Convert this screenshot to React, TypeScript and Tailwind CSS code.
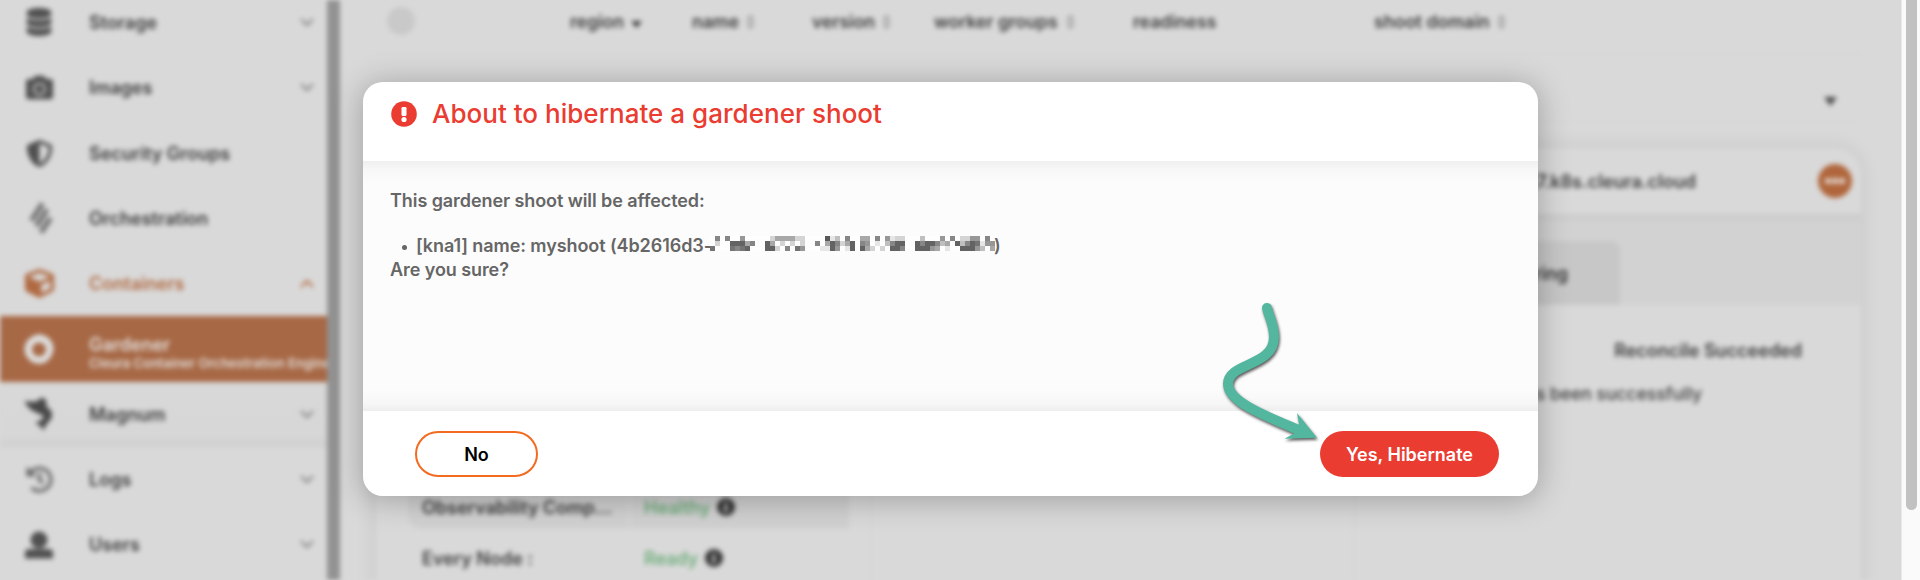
import React from "react";
import { FaDatabase, FaCamera, FaShieldAlt, FaHistory, FaCube } from "react-icons/fa";

const OrchestrationIcon = () => (
  <svg width="24" height="34" viewBox="0 0 24 34" className="ml-1" fill="none" stroke="#6e6e6e" strokeWidth="5">
    <path d="M2.500 19.500L13.500 2.500" />
    <path d="M7.500 25L18 8.500" />
    <path d="M12 31.500L21.500 17" />
  </svg>
);

const GardenerIcon = () => (
  <svg width="30" height="30" viewBox="0 0 30 30">
    <path d="M15 0l8 2.500 5 5.500 1.800 7-2.800 8-5.500 5.500L15 30l-7.500-2L2 22 .2 15 2.500 7.500 8 2.500z" fill="#dedede" />
    <circle cx="15" cy="15.500" r="7" fill="#a76845" />
  </svg>
);

const MagnumIcon = () => (
  <svg width="32" height="36" viewBox="0 0 32 36" fill="#484848">
    <path d="M.5 4.500L12 5l8-5 4 4.500V10l5.500 5v7.500L24 29l-3.500 6.500L17.500 31 12 27l6-2 3.500-4.500L14 17l-6-3-5-5z" />
  </svg>
);

const UserIcon = () => (
  <svg width="28" height="28" viewBox="0 0 28 28" fill="#505050">
    <circle cx="14" cy="9" r="8.500" />
    <path d="M4 18h20a4 4 0 0 1 4 4v5.500H0V22a4 4 0 0 1 4-4z" />
  </svg>
);

const Chevron = ({ up = false, color = "#8a8a8a" }: { up?: boolean; color?: string }) => (
  <svg width="14" height="9" viewBox="0 0 14 9" fill="none" stroke={color} strokeWidth="2.400">
    <path d={up ? "M1 8l6-6 6 6" : "M1 1l6 6 6-6"} />
  </svg>
);

const Sorter = () => (
  <svg width="9" height="16" viewBox="0 0 9 16" fill="#a8a8a8">
    <path d="M4.500 0L9 7H0zM4.500 16L9 9H0z" />
  </svg>
);

type NavRow = { label: string; icon: React.ReactNode; arrow?: boolean };

const topRows: NavRow[] = [
  { label: "Storage", icon: <FaDatabase size={28} />, arrow: true },
  { label: "Images", icon: <FaCamera size={27} />, arrow: true },
  { label: "Security Groups", icon: <FaShieldAlt size={27} /> },
  { label: "Orchestration", icon: <OrchestrationIcon /> },
];

const bottomRows: NavRow[] = [
  { label: "Logs", icon: <FaHistory size={27} color="#6a6a6a" />, arrow: true },
  { label: "Users", icon: <UserIcon />, arrow: true },
];

const Row = ({ label, icon, arrow }: NavRow) => (
  <div className="flex h-[65.300px] shrink-0 items-center text-[#505050]">
    <div className="ml-[24px] flex w-[30px] justify-center">{icon}</div>
    <div className="ml-[35px] flex-1 text-[18px] font-semibold text-[#3c3c3c]">{label}</div>
    {arrow && (
      <div className="mr-[13px]">
        <Chevron />
      </div>
    )}
  </div>
);

const Sidebar = () => (
  <div className="flex h-[580px] w-[327px] shrink-0 flex-col overflow-hidden bg-[#d9d9d9]">
    <div className="-mt-[10.200px] flex flex-col">
      {topRows.map((r) => (
        <Row key={r.label} {...r} />
      ))}
      <div className="flex h-[65.300px] shrink-0 items-center text-[#b06a43]">
        <div className="ml-[24px] flex w-[30px] justify-center">
          <FaCube size={29} />
        </div>
        <div className="ml-[35px] flex-1 text-[18px] font-semibold">Containers</div>
        <div className="mr-[13px]">
          <Chevron up color="#b5734f" />
        </div>
      </div>
      <div className="flex h-[65.300px] shrink-0 items-center bg-[#a76845] text-[#e2dedb]">
        <div className="ml-[24px] w-[30px]">
          <GardenerIcon />
        </div>
        <div className="mt-[10px] ml-[35px] flex-1 whitespace-nowrap">
          <div className="text-[18px] leading-[19px] font-semibold">Gardener</div>
          <div className="text-[13px] leading-[18px] font-semibold">Cleura Container Orchestration Engine</div>
        </div>
      </div>
      <div className="bg-[linear-gradient(#d8d8d8_0%,#d7d7d7_82%,#cfcfcf_100%)]">
        <Row label="Magnum" icon={<MagnumIcon />} arrow />
      </div>
      {bottomRows.map((r) => (
        <Row key={r.label} {...r} />
      ))}
    </div>
  </div>
);

const TableHead = () => (
  <div className="flex h-[54px] items-center border-b border-[#d3d3d3] pb-[9px] text-[17.600px] font-semibold text-[#3c3c3c]">
    <div className="mb-[2px] ml-[11px] h-[28px] w-[28px] rounded-full bg-[#c9c9c9]" />
    <div className="ml-[155px] flex w-[122px] items-center gap-[7px]">
      region
      <svg width="11" height="7" viewBox="0 0 11 7" className="mt-[6px]">
        <path d="M0 0h11L5.500 7z" fill="#3c3c3c" />
      </svg>
    </div>
    <div className="flex w-[120px] items-center gap-[7px]">name<Sorter /></div>
    <div className="flex w-[122px] items-center gap-[7px]">version<Sorter /></div>
    <div className="flex w-[199px] items-center gap-[8px]">worker groups<Sorter /></div>
    <div className="w-[241px]">readiness</div>
    <div className="flex items-center gap-[7px]">shoot domain<Sorter /></div>
  </div>
);

const InfoDot = () => (
  <svg width="18" height="18" viewBox="0 0 18 18">
    <circle cx="9" cy="9" r="9" fill="#333" />
    <path d="M7.500 4h3v2.500h-3zM7 7.500h3.500V14H7z" fill="#bbb" />
  </svg>
);

const Main = () => (
  <div className="h-[580px] w-[1561px] shrink-0 overflow-hidden bg-[#d9d9d9] pl-[36px]">
    <div className="w-[1485px]">
      <TableHead />
      <div className="flex h-[68px] items-center justify-end border-b border-[#d5d5d5] pt-[28px] pr-[24px]">
        <svg width="13" height="9" viewBox="0 0 13 9">
          <path d="M0 0h13L6.500 9z" fill="#4a4a4a" />
        </svg>
      </div>
      <div className="mt-[26px] h-[520px] overflow-hidden rounded-t-[26px] bg-[#d9d9d9] shadow-[0_0_18px_3px_rgba(0,0,0,0.07)]">
        <div className="flex h-[66px] items-center">
          <div className="flex-1 pr-[122px] text-right text-[18px] font-semibold text-[#3c3c3c]">
            shoot--myshoot--4b2617.k8s.cleura.cloud
          </div>
          <div className="mr-[9px] flex h-[34px] w-[34px] items-center justify-center gap-[1px] rounded-full bg-[#b0663c]">
            <i className="h-[6px] w-[6px] rounded-full bg-[#e5dcd6]" />
            <i className="h-[6px] w-[6px] rounded-full bg-[#e5dcd6]" />
            <i className="h-[6px] w-[6px] rounded-full bg-[#e5dcd6]" />
          </div>
        </div>
        <div className="flex h-[91px] items-end bg-[linear-gradient(#cbcbcb_0px,#d2d2d2_10px)] pl-[1060px]">
          <div className="flex h-[64px] w-[184px] items-center justify-end rounded-t-[9px] bg-[#c7c7c7] pr-[52px] text-[18px] font-semibold text-[#333]">
            Monitoring
          </div>
        </div>
        <div className="grid h-[363px] grid-cols-[495px_484px_1fr]">
          <div className="border-r border-[#d2d2d2] pt-[180px] pl-[32px] text-[18px] font-semibold text-[#3c3c3c]">
            <div className="flex h-[44px] gap-[2px] overflow-hidden rounded-b-[14px]">
              <div className="h-full w-[220px] bg-[#d1d1d1] pt-[9px] pl-[14px] whitespace-nowrap">Observability Comp...</div>
              <div className="flex h-full w-[219px] items-start gap-[7px] bg-[#d1d1d1] pt-[9px] pl-[14px]">
                <span className="font-medium text-[#63a872]">Healthy</span>
                <span className="pt-[4px]"><InfoDot /></span>
              </div>
            </div>
            <div className="flex h-[58px] items-center pl-[14px]">
              <span className="w-[222px]">Every Node :</span>
              <span className="mr-[7px] font-medium text-[#63a872]">Ready</span>
              <InfoDot />
            </div>
          </div>
          <div className="border-r border-[#d2d2d2]" />
          <div className="text-[18px] text-[#3c3c3c]">
            <div className="pt-[32px] pr-[59px] text-right font-semibold">Reconcile Succeeded</div>
            <div className="pt-[17px] pr-[159px] text-right text-[17.500px] font-medium whitespace-nowrap">
              Shoot cluster has been successfully
            </div>
          </div>
        </div>
      </div>
    </div>
  </div>
);

const mosaic = [
  "060600500000244442200009130600440605122000300050602255060",
  "020088846008402020200604862480650103688008688634083687155",
  "700076780008820607500011850180842020886008885401008885304",
];

const shades = ["#fefefe", "#e6e6e6", "#d4d4d4", "#bfbfbf", "#a8a8a8", "#979797", "#868686", "#747474", "#636363", "#585858"];

const Mosaic = () => (
  <svg width="285" height="15" viewBox="0 0 57 3" shapeRendering="crispEdges" className="-mt-[5px]">
    {mosaic.map((row, y) =>
      row.split("").map((c, x) => <rect key={`${x}-${y}`} x={x} y={y} width="1" height="1" fill={shades[Number(c)]} />)
    )}
  </svg>
);

const Dialog = () => (
  <div className="absolute top-[82px] left-[363px] flex h-[414px] w-[1175px] flex-col overflow-hidden rounded-[20px] bg-white">
    <div className="flex h-[79px] shrink-0 items-start pt-[15px] pl-[28px] text-[#ea3c31]">
      <svg width="26" height="26" viewBox="0 0 26 26" className="mt-[4px]">
        <circle cx="13" cy="13" r="12.800" fill="#ea3c31" />
        <rect x="10.500" y="6" width="5" height="9" rx="1.300" fill="#fff" />
        <circle cx="13" cy="18.500" r="2.600" fill="#fff" />
      </svg>
      <h1 className="ml-[15px] text-[26px] leading-[34px] font-[550] tracking-[0.020px] whitespace-nowrap">
        About to hibernate a gardener shoot
      </h1>
    </div>
    <div className="h-[250px] shrink-0 bg-[linear-gradient(#efefef_0px,#f7f7f7_8px,#fcfcfc_22px,#fcfcfc_228px,#f7f7f7_242px,#eeeeee_250px)] pt-[28px] pl-[27px] text-[18px] leading-[24px] font-[560] tracking-[-0.080px] text-[#666]">
      <p>This gardener shoot will be affected:</p>
      <div className="mt-[20px] flex h-[25px] items-center whitespace-nowrap">
        <i className="mt-[3px] mr-[9px] ml-[12px] h-[5px] w-[5px] rounded-full bg-[#666]" />
        <span className="w-[294px]">[kna1] name: myshoot (4b2616d3-</span>
        <Mosaic />
        <span className="-ml-[1px]">)</span>
      </div>
      <p>Are you sure?</p>
    </div>
    <div className="flex flex-1 items-start justify-between pt-[20px] pr-[39px] pl-[52px] text-[18px] font-semibold">
      <button className="h-[46px] w-[123px] rounded-full border-[2.500px] border-[#f26b21] bg-white text-black">No</button>
      <button className="h-[46px] w-[179px] rounded-full bg-[#ea3c31] text-white">Yes, Hibernate</button>
    </div>
  </div>
);

const Arrow = () => (
  <svg
    width="110"
    height="150"
    viewBox="1215 295 110 150"
    className="absolute top-[295px] left-[1215px] drop-shadow-[1px_2px_1.500px_rgba(0,0,0,0.65)]"
  >
    <path
      d="M1267 308C1269 317 1274 324 1274 337C1274 367 1228 362 1228 384C1228 402 1268 417 1299 430"
      fill="none"
      stroke="#53b7a0"
      strokeWidth="10"
      strokeLinecap="round"
    />
    <path d="M1317 437.700L1297 413L1299 424L1295 433L1284.500 438.700z" fill="#53b7a0" />
  </svg>
);

export default function App() {
  return (
    <div className="relative flex h-[580px] w-[1920px] overflow-hidden bg-[#d9d9d9] font-['Inter','Liberation_Sans',sans-serif]">
      <div className="h-[580px] w-[1901px] shrink-0 overflow-hidden">
        <div className="flex w-[1901px] blur-[2.500px]">
          <Sidebar />
          <div className="h-[580px] w-[13px] shrink-0 bg-[#929292]" />
          <Main />
        </div>
      </div>
      <div className="h-[580px] w-[19px] border-l border-[#e8e8e8] bg-[#fafafa] pl-[4px]">
        <div className="h-[510px] w-[11px] rounded-b-full bg-[#c1c1c1]" />
      </div>
      <div className="absolute top-[82px] left-[363px] h-[414px] w-[1175px] rounded-[20px] shadow-[0_3px_30px_2px_rgba(0,0,0,0.25)]" />
      <Dialog />
      <Arrow />
    </div>
  );
}
